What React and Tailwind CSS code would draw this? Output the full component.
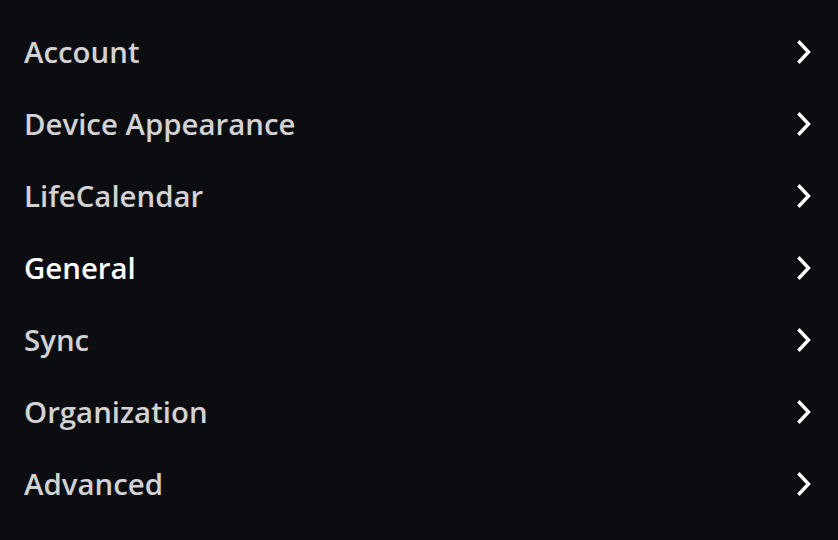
const ITEMS = [
  { label: 'Account' },
  { label: 'Device Appearance' },
  { label: 'LifeCalendar' },
  { label: 'General', active: true },
  { label: 'Sync' },
  { label: 'Organization' },
  { label: 'Advanced' },
];

function Chevron() {
  return (
    <svg width="16" height="24" viewBox="0 0 16 24" fill="none" className="shrink-0">
      <path d="M3.5 2.5 L12.5 12 L3.5 21.5" stroke="#ffffff" strokeWidth="3.4" strokeLinecap="square" strokeLinejoin="miter" />
    </svg>
  );
}

export default function App() {
  return (
    <div
      className="w-[838px] h-[540px] bg-[#0c0d10] pt-4"
      style={{ fontFamily: '"Open Sans", "Noto Sans", sans-serif' }}
    >
      {ITEMS.map((item) => (
        <div key={item.label} className="flex items-center justify-between h-[72px] pl-6 pr-[26px]">
          <span
            className={`text-[29.4px] font-semibold leading-none pt-0.5 ${
              item.active ? 'text-white' : 'text-[#d2d2d4]'
            }`}
          >
            {item.label}
          </span>
          <Chevron />
        </div>
      ))}
    </div>
  );
}
